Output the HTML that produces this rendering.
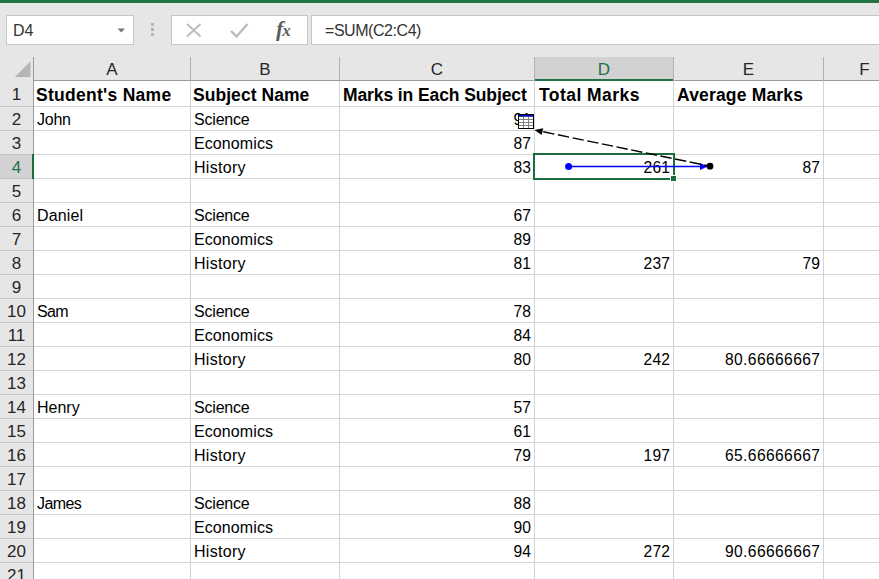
<!DOCTYPE html>
<html><head><meta charset="utf-8"><title>Excel</title>
<style>
html,body{margin:0;padding:0;}
body{width:879px;height:579px;overflow:hidden;background:#e6e6e6;position:relative;font-family:"Liberation Sans",sans-serif;color:#000;}
.abs{position:absolute;}
.top{left:0;top:0;width:879px;height:3px;background:#217346;}
.box{background:#fff;border:1px solid #c6c6c6;box-sizing:border-box;}
.grid{left:0;top:57px;width:879px;height:522px;background:#fff;}
.ch{top:57px;height:23px;line-height:26px;text-align:center;font-size:17px;color:#262626;background:#e6e6e6;border-bottom:1px solid #9b9b9b;}
.rh{left:0;width:33px;height:23px;line-height:25px;text-align:center;font-size:17px;color:#262626;background:#e6e6e6;border-bottom:1px solid #c3c3c3;}
.vl{width:1px;background:#d4d4d4;}
.hl{height:1px;background:#d4d4d4;left:34px;width:845px;}
.c{height:23px;line-height:25px;font-size:16px;white-space:nowrap;overflow:hidden;box-sizing:border-box;padding:0 3px;}
.b{font-weight:bold;font-size:17.5px;letter-spacing:-0.45px;}
.r{text-align:right;font-size:15.6px;letter-spacing:0.22px;padding-right:2.78px;}
</style></head><body>
<div class="abs top"></div>
<div class="abs box" style="left:6px;top:15px;width:128px;height:30px;"></div>
<div class="abs" style="left:13px;top:15px;height:30px;line-height:32px;font-size:16px;color:#333;">D4</div>
<svg class="abs" style="left:117px;top:28px" width="9" height="5"><path d="M0.5 0.5H8L4.25 4.5Z" fill="#777"/></svg>
<div class="abs" style="left:151px;top:23px;width:3px;height:3px;background:#b5b5b5;"></div>
<div class="abs" style="left:151px;top:28px;width:3px;height:3px;background:#b5b5b5;"></div>
<div class="abs" style="left:151px;top:33px;width:3px;height:3px;background:#b5b5b5;"></div>
<div class="abs box" style="left:171px;top:15px;width:137px;height:30px;"></div>
<svg class="abs" style="left:171px;top:15px" width="136" height="30" fill="none" stroke-linecap="butt">
<path d="M16 9L29.5 21.5M29.5 9L16 21.5" stroke="#bcbcbc" stroke-width="2"/>
<path d="M60 16L65.5 21.5L76.5 9" stroke="#bcbcbc" stroke-width="2.4"/>
</svg>
<div class="abs" style="left:276px;top:14px;height:30px;line-height:30px;font-size:22px;font-style:italic;font-weight:bold;font-family:'Liberation Serif',serif;color:#5c5c5c;letter-spacing:-1px;">f<span style="font-size:17px;">x</span></div>
<div class="abs box" style="left:311px;top:15px;width:580px;height:30px;"></div>
<div class="abs" style="left:325px;top:15px;height:30px;line-height:32px;font-size:16px;letter-spacing:-0.45px;color:#333;">=SUM(C2:C4)</div>
<div class="abs grid"></div>

<div class="abs" style="left:0;top:57px;width:879px;height:24px;background:#e6e6e6;"></div>
<div class="abs ch" style="left:34px;width:156px;">A</div>
<div class="abs" style="left:33px;top:57px;width:1px;height:24px;background:#b1b1b1;"></div>
<div class="abs ch" style="left:191px;width:148px;">B</div>
<div class="abs" style="left:190px;top:57px;width:1px;height:24px;background:#b1b1b1;"></div>
<div class="abs ch" style="left:340px;width:194px;">C</div>
<div class="abs" style="left:339px;top:57px;width:1px;height:24px;background:#b1b1b1;"></div>
<div class="abs ch" style="left:535px;width:138px;background:#d2d2d2;color:#217346;border-bottom:2px solid #217346;height:22px;">D</div>
<div class="abs" style="left:534px;top:57px;width:1px;height:24px;background:#b1b1b1;"></div>
<div class="abs ch" style="left:674px;width:149px;">E</div>
<div class="abs" style="left:673px;top:57px;width:1px;height:24px;background:#b1b1b1;"></div>
<div class="abs ch" style="left:824px;width:81px;">F</div>
<div class="abs" style="left:823px;top:57px;width:1px;height:24px;background:#b1b1b1;"></div>
<svg class="abs" style="left:14px;top:61px" width="17" height="17"><path d="M16.5 0.3V16H0.8Z" fill="#b5b5b5"/></svg>
<div class="abs rh" style="top:81px;height:25px;line-height:27px;">1</div>
<div class="abs rh" style="top:107px;height:23px;line-height:25px;">2</div>
<div class="abs rh" style="top:131px;height:23px;line-height:25px;">3</div>
<div class="abs rh" style="top:155px;height:23px;line-height:25px;background:#d2d2d2;color:#217346;">4</div>
<div class="abs rh" style="top:179px;height:23px;line-height:25px;">5</div>
<div class="abs rh" style="top:203px;height:23px;line-height:25px;">6</div>
<div class="abs rh" style="top:227px;height:23px;line-height:25px;">7</div>
<div class="abs rh" style="top:251px;height:23px;line-height:25px;">8</div>
<div class="abs rh" style="top:275px;height:23px;line-height:25px;">9</div>
<div class="abs rh" style="top:299px;height:23px;line-height:25px;">10</div>
<div class="abs rh" style="top:323px;height:23px;line-height:25px;">11</div>
<div class="abs rh" style="top:347px;height:23px;line-height:25px;">12</div>
<div class="abs rh" style="top:371px;height:23px;line-height:25px;">13</div>
<div class="abs rh" style="top:395px;height:23px;line-height:25px;">14</div>
<div class="abs rh" style="top:419px;height:23px;line-height:25px;">15</div>
<div class="abs rh" style="top:443px;height:23px;line-height:25px;">16</div>
<div class="abs rh" style="top:467px;height:23px;line-height:25px;">17</div>
<div class="abs rh" style="top:491px;height:23px;line-height:25px;">18</div>
<div class="abs rh" style="top:515px;height:23px;line-height:25px;">19</div>
<div class="abs rh" style="top:539px;height:23px;line-height:25px;">20</div>
<div class="abs rh" style="top:563px;height:23px;line-height:25px;">21</div>
<div class="abs" style="left:33px;top:57px;width:1px;height:522px;background:#9b9b9b;"></div>
<div class="abs" style="left:32px;top:154px;width:2px;height:25px;background:#1a6e3e;"></div>
<div class="abs hl" style="top:106px;"></div>
<div class="abs hl" style="top:130px;"></div>
<div class="abs hl" style="top:154px;"></div>
<div class="abs hl" style="top:178px;"></div>
<div class="abs hl" style="top:202px;"></div>
<div class="abs hl" style="top:226px;"></div>
<div class="abs hl" style="top:250px;"></div>
<div class="abs hl" style="top:274px;"></div>
<div class="abs hl" style="top:298px;"></div>
<div class="abs hl" style="top:322px;"></div>
<div class="abs hl" style="top:346px;"></div>
<div class="abs hl" style="top:370px;"></div>
<div class="abs hl" style="top:394px;"></div>
<div class="abs hl" style="top:418px;"></div>
<div class="abs hl" style="top:442px;"></div>
<div class="abs hl" style="top:466px;"></div>
<div class="abs hl" style="top:490px;"></div>
<div class="abs hl" style="top:514px;"></div>
<div class="abs hl" style="top:538px;"></div>
<div class="abs hl" style="top:562px;"></div>
<div class="abs hl" style="top:586px;"></div>
<div class="abs vl" style="left:190px;top:81px;height:498px;"></div>
<div class="abs vl" style="left:339px;top:81px;height:498px;"></div>
<div class="abs vl" style="left:534px;top:81px;height:498px;"></div>
<div class="abs vl" style="left:673px;top:81px;height:498px;"></div>
<div class="abs vl" style="left:823px;top:81px;height:498px;"></div>
<div class="abs c b" style="left:34px;top:83px;width:156px;letter-spacing:0.28px;padding-left:2px;">Student's Name</div>
<div class="abs c b" style="left:191px;top:83px;width:148px;letter-spacing:0.05px;padding-left:2px;">Subject Name</div>
<div class="abs c b" style="left:340px;top:83px;width:194px;letter-spacing:-0.1px;padding-left:3px;">Marks in Each Subject</div>
<div class="abs c b" style="left:535px;top:83px;width:138px;letter-spacing:0.45px;padding-left:4px;">Total Marks</div>
<div class="abs c b" style="left:674px;top:83px;width:149px;letter-spacing:0.17px;padding-left:3px;">Average Marks</div>
<div class="abs c" style="left:34px;top:107px;width:156px;letter-spacing:-0.25px;">John</div>
<div class="abs c" style="left:191px;top:107px;width:148px;letter-spacing:-0.2px;">Science</div>
<div class="abs c r" style="left:340px;top:107px;width:194px;">91</div>
<div class="abs c" style="left:191px;top:131px;width:148px;letter-spacing:0.1px;">Economics</div>
<div class="abs c r" style="left:340px;top:131px;width:194px;">87</div>
<div class="abs c" style="left:191px;top:155px;width:148px;letter-spacing:0.3px;">History</div>
<div class="abs c r" style="left:340px;top:155px;width:194px;">83</div>
<div class="abs c r" style="left:535px;top:155px;width:138px;">261</div>
<div class="abs c r" style="left:674px;top:155px;width:149px;">87</div>
<div class="abs c" style="left:34px;top:203px;width:156px;letter-spacing:0.15px;">Daniel</div>
<div class="abs c" style="left:191px;top:203px;width:148px;letter-spacing:-0.2px;">Science</div>
<div class="abs c r" style="left:340px;top:203px;width:194px;">67</div>
<div class="abs c" style="left:191px;top:227px;width:148px;letter-spacing:0.1px;">Economics</div>
<div class="abs c r" style="left:340px;top:227px;width:194px;">89</div>
<div class="abs c" style="left:191px;top:251px;width:148px;letter-spacing:0.3px;">History</div>
<div class="abs c r" style="left:340px;top:251px;width:194px;">81</div>
<div class="abs c r" style="left:535px;top:251px;width:138px;">237</div>
<div class="abs c r" style="left:674px;top:251px;width:149px;">79</div>
<div class="abs c" style="left:34px;top:299px;width:156px;letter-spacing:-0.7px;">Sam</div>
<div class="abs c" style="left:191px;top:299px;width:148px;letter-spacing:-0.2px;">Science</div>
<div class="abs c r" style="left:340px;top:299px;width:194px;">78</div>
<div class="abs c" style="left:191px;top:323px;width:148px;letter-spacing:0.1px;">Economics</div>
<div class="abs c r" style="left:340px;top:323px;width:194px;">84</div>
<div class="abs c" style="left:191px;top:347px;width:148px;letter-spacing:0.3px;">History</div>
<div class="abs c r" style="left:340px;top:347px;width:194px;">80</div>
<div class="abs c r" style="left:535px;top:347px;width:138px;">242</div>
<div class="abs c r" style="left:674px;top:347px;width:149px;letter-spacing:0.4px;padding-right:2.6px;">80.66666667</div>
<div class="abs c" style="left:34px;top:395px;width:156px;">Henry</div>
<div class="abs c" style="left:191px;top:395px;width:148px;letter-spacing:-0.2px;">Science</div>
<div class="abs c r" style="left:340px;top:395px;width:194px;">57</div>
<div class="abs c" style="left:191px;top:419px;width:148px;letter-spacing:0.1px;">Economics</div>
<div class="abs c r" style="left:340px;top:419px;width:194px;">61</div>
<div class="abs c" style="left:191px;top:443px;width:148px;letter-spacing:0.3px;">History</div>
<div class="abs c r" style="left:340px;top:443px;width:194px;">79</div>
<div class="abs c r" style="left:535px;top:443px;width:138px;">197</div>
<div class="abs c r" style="left:674px;top:443px;width:149px;letter-spacing:0.4px;padding-right:2.6px;">65.66666667</div>
<div class="abs c" style="left:34px;top:491px;width:156px;letter-spacing:-0.6px;">James</div>
<div class="abs c" style="left:191px;top:491px;width:148px;letter-spacing:-0.2px;">Science</div>
<div class="abs c r" style="left:340px;top:491px;width:194px;">88</div>
<div class="abs c" style="left:191px;top:515px;width:148px;letter-spacing:0.1px;">Economics</div>
<div class="abs c r" style="left:340px;top:515px;width:194px;">90</div>
<div class="abs c" style="left:191px;top:539px;width:148px;letter-spacing:0.3px;">History</div>
<div class="abs c r" style="left:340px;top:539px;width:194px;">94</div>
<div class="abs c r" style="left:535px;top:539px;width:138px;">272</div>
<div class="abs c r" style="left:674px;top:539px;width:149px;letter-spacing:0.4px;padding-right:2.6px;">90.66666667</div>
<div class="abs" style="left:533px;top:153px;width:142px;height:27px;border:2px solid #1a6e3e;box-sizing:border-box;"></div>
<div class="abs" style="left:670px;top:175px;width:7px;height:7px;background:#1a6e3e;border:1px solid #fff;box-sizing:border-box;"></div>
<svg class="abs" style="left:0;top:0" width="879" height="579">
<line x1="568.6" y1="166.5" x2="702" y2="166.5" stroke="#0000ff" stroke-width="1.3"/>
<circle cx="568.6" cy="166.5" r="3.5" fill="#0000ff"/>
<path d="M707.8 166.5L700 163V170Z" fill="#0000ff"/>
<line x1="710" y1="166.2" x2="541" y2="131.3" stroke="#000" stroke-width="1.4" stroke-dasharray="11.4 3.55" stroke-dashoffset="5.6"/>
<circle cx="710" cy="166.2" r="3.4" fill="#000"/>
<path d="M534.4 130L543.2 128.2L541.7 135.1Z" fill="#000"/>
<g shape-rendering="crispEdges">
<rect x="518" y="114" width="16" height="15" fill="#000"/>
<rect x="519" y="115" width="14" height="13" fill="#808080"/>
<rect x="519" y="115" width="14" height="1" fill="#0000e0"/>
<rect x="519" y="116" width="14" height="1" fill="#40408a"/>
<g fill="#fff">
<rect x="519" y="117" width="4" height="2"/><rect x="524" y="117" width="4" height="2"/><rect x="529" y="117" width="4" height="2"/>
<rect x="519" y="120" width="4" height="2"/><rect x="524" y="120" width="4" height="2"/><rect x="529" y="120" width="4" height="2"/>
<rect x="519" y="123" width="4" height="2"/><rect x="524" y="123" width="4" height="2"/><rect x="529" y="123" width="4" height="2"/>
<rect x="519" y="126" width="4" height="2"/><rect x="524" y="126" width="4" height="2"/><rect x="529" y="126" width="4" height="2"/>
</g>
</g>
</svg>
</body></html>
